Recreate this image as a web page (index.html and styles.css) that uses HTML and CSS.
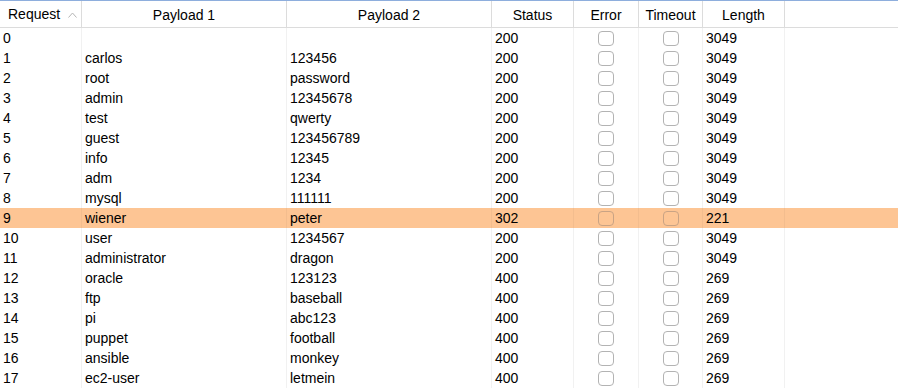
FILE: index.html
```html
<!DOCTYPE html>
<html lang="en">
  <head>
    <meta charset="UTF-8" />
    <meta name="viewport" content="width=device-width, initial-scale=1.0" />
    <title>Intruder results</title>
    <link rel="stylesheet" href="styles.css">
  </head>
  <body>
    <div class="results">
      <div class="row head">
        <div class="cell sorted">Request
          <svg class="sort-arrow" width="9" height="6" viewBox="0 0 9 6"><polyline points="0.5,5.5 4.5,1 8.5,5.5" fill="none" stroke="#b5b5b5" stroke-width="1"/></svg>
        </div>
        <div class="cell">Payload 1</div>
        <div class="cell">Payload 2</div>
        <div class="cell">Status</div>
        <div class="cell">Error</div>
        <div class="cell">Timeout</div>
        <div class="cell">Length</div>
        <div class="cell filler"></div>
      </div>
      <div id="rows"></div>
    </div>

    <script>
      const data = [
        ["0", "", "", "200", "3049"],
        ["1", "carlos", "123456", "200", "3049"],
        ["2", "root", "password", "200", "3049"],
        ["3", "admin", "12345678", "200", "3049"],
        ["4", "test", "qwerty", "200", "3049"],
        ["5", "guest", "123456789", "200", "3049"],
        ["6", "info", "12345", "200", "3049"],
        ["7", "adm", "1234", "200", "3049"],
        ["8", "mysql", "111111", "200", "3049"],
        ["9", "wiener", "peter", "302", "221"],
        ["10", "user", "1234567", "200", "3049"],
        ["11", "administrator", "dragon", "200", "3049"],
        ["12", "oracle", "123123", "400", "269"],
        ["13", "ftp", "baseball", "400", "269"],
        ["14", "pi", "abc123", "400", "269"],
        ["15", "puppet", "football", "400", "269"],
        ["16", "ansible", "monkey", "400", "269"],
        ["17", "ec2-user", "letmein", "400", "269"]
      ];

      const rows = document.getElementById("rows");
      for (let i = 0; i < data.length; i++) {
        const [req, p1, p2, status, len] = data[i];
        const row = document.createElement("div");
        row.className = "row" + (status === "302" ? " hit" : "");
        row.innerHTML =
          '<div class="cell">' + req + "</div>" +
          '<div class="cell">' + p1 + "</div>" +
          '<div class="cell">' + p2 + "</div>" +
          '<div class="cell">' + status + "</div>" +
          '<div class="cell check"><span class="box"></span></div>' +
          '<div class="cell check"><span class="box"></span></div>' +
          '<div class="cell">' + len + "</div>" +
          '<div class="cell filler"></div>';
        rows.appendChild(row);
      }
    </script>
  </body>
</html>
```

FILE: styles.css
```css
body {
  margin: 0;
  font-family: "Liberation Sans", Arial, sans-serif;
  font-size: 14px;
  color: #000;
  background: #fff;
  overflow: hidden;
}
.results {
  border-top: 1px solid #8eaedd;
}
.row {
  display: grid;
  grid-template-columns: 82px 205px 205px 82px 65px 64px 82px 1fr;
  height: 20px;
  line-height: 21px;
}
.row .cell {
  border-right: 1px solid #f1f1f1;
  padding-left: 3px;
  white-space: nowrap;
  overflow: hidden;
}
.row .cell.filler {
  border-right: none;
}
.row.hit {
  background: #fdc594;
}
.row.hit .cell {
  border-right-color: #f3bd8e;
}
.head {
  height: 26px;
  line-height: 28px;
  border-bottom: 1px solid #dcdcdc;
}
.head .cell {
  border-right: 1px solid #dcdcdc;
  padding-left: 0;
  text-align: center;
}
.head .cell.sorted {
  display: flex;
  align-items: center;
  padding-left: 8px;
  text-align: left;
}
.sort-arrow {
  margin-left: 8px;
  margin-top: 1px;
}
.check {
  display: flex;
  align-items: center;
  justify-content: center;
}
.row .cell.check {
  padding-left: 0;
}
.box {
  width: 16px;
  height: 15px;
  box-sizing: border-box;
  border: 1px solid #b3b3b3;
  border-radius: 4px;
  background: #fff;
}
.row.hit .box {
  background: transparent;
  border-color: #c9a384;
}
```
